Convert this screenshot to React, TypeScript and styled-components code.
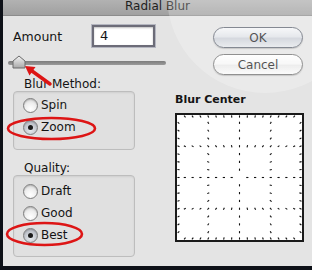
import React from "react";
import styled, { createGlobalStyle } from "styled-components";

const Global = createGlobalStyle`
  html, body { margin: 0; padding: 0; background: #0e1118; }
  body { width: 312px; height: 270px; overflow: hidden; }
  * { box-sizing: border-box; }
`;

const Dialog = styled.div`
  position: relative;
  margin-left: 3px;
  width: 309px;
  height: 266px;
  background: #e4e4e4;
  font-family: "DejaVu Sans", "Liberation Sans", sans-serif;
  font-size: 12px;
  color: #141414;
  overflow: hidden;
  display: flex;
  flex-direction: column;
`;

const Glare = styled.div`
  position: absolute;
  left: 164px;
  top: -103px;
  width: 196px;
  height: 196px;
  border-radius: 50%;
  background: rgba(255, 255, 255, 0.24);
  pointer-events: none;
`;

const TitleBar = styled.div`
  height: 16px;
  flex: none;
  background: linear-gradient(#b2b2b2, #a0a0a0);
  border-bottom: 1px solid #8c8c8c;
  display: flex;
  justify-content: center;
`;

const TitleText = styled.span`
  line-height: 13px;
  font-size: 12px;
  color: #1e1e1e;
`;

const TopRow = styled.div`
  display: flex;
  padding: 9px 9px 0 5px;
`;

const LeftTop = styled.div`
  width: 158px;
  display: flex;
  flex-direction: column;
`;

const AmountRow = styled.div`
  display: flex;
  align-items: center;
  height: 22px;
  padding-left: 5px;
`;

const AmountLabel = styled.span`
  width: 79px;
  font-size: 12.5px;
`;

const NumberBox = styled.div`
  width: 63px;
  height: 22px;
  background: #fff;
  border: 2px solid #6c6c78;
  box-shadow: 0 0 0 1px #b4b6c0, inset 0 1px 2px rgba(0, 0, 0, 0.25);
  padding-left: 6px;
  font-size: 13px;
  line-height: 18px;
`;

const Slider = styled.div`
  position: relative;
  margin-top: 9px;
  height: 14px;
  width: 158px;
`;

const Track = styled.div`
  position: absolute;
  left: 0;
  right: 0;
  top: 5px;
  height: 4px;
  border-radius: 2px;
  background: linear-gradient(#7c7c7c, #9a9a9a);
`;

const Thumb = styled.svg`
  position: absolute;
  left: 4px;
  top: -1px;
`;

const Spacer = styled.div`
  flex: 1;
`;

const Buttons = styled.div`
  width: 90px;
  margin-top: 2px;
  display: flex;
  flex-direction: column;
  gap: 6px;
`;

const PillButton = styled.div<{ $default?: boolean }>`
  height: 21px;
  border-radius: 11px;
  border: 1px solid ${(p) => (p.$default ? "#5e6470" : "#6e6e6e")};
  background: ${(p) =>
    p.$default
      ? "linear-gradient(#f4f5f7 0%, #dfe2e7 45%, #c9cdd5 55%, #e3e6ea 100%)"
      : "linear-gradient(#ffffff 0%, #f6f6f6 45%, #e8e8e8 55%, #fafafa 100%)"};
  box-shadow: 0 1px 1px rgba(0, 0, 0, 0.2);
  display: flex;
  align-items: center;
  justify-content: center;
  font-size: 12px;
  color: #1a1a1a;
`;

const BottomRow = styled.div`
  display: flex;
  padding-left: 10px;
`;

const LeftCol = styled.div`
  width: 122px;
  display: flex;
  flex-direction: column;
`;

const SectionLabel = styled.div<{ $gap: number }>`
  margin-top: ${(p) => p.$gap}px;
  padding-left: 11px;
  line-height: 14px;
  height: 14px;
`;

const GroupBox = styled.div<{ $h: number; $pad: number }>`
  height: ${(p) => p.$h}px;
  padding-top: ${(p) => p.$pad}px;
  padding-left: 9px;
  border: 1px solid #bdbdbd;
  border-radius: 4px;
  background: #e0e0e0;
  box-shadow: inset 0 1px 2px rgba(0, 0, 0, 0.08);
  display: flex;
  flex-direction: column;
`;

const RadioRow = styled.div`
  height: 22px;
  display: flex;
  align-items: center;
  gap: 3px;
`;

const RadioCircle = styled.div<{ $on?: boolean }>`
  width: 15px;
  height: 15px;
  border-radius: 50%;
  border: 1px solid #7e7e7e;
  background: ${(p) =>
    p.$on
      ? "radial-gradient(circle at 50% 70%, #e8ecf0 0%, #b8bcc4 70%, #9ea2aa 100%)"
      : "radial-gradient(circle at 50% 75%, #ffffff 0%, #eeeeee 50%, #c8c8c8 100%)"};
  box-shadow: inset 0 1px 1px rgba(0, 0, 0, 0.15);
  display: flex;
  align-items: center;
  justify-content: center;
  &::after {
    content: "";
    width: 5px;
    height: 5px;
    border-radius: 50%;
    background: #1a1a1a;
    display: ${(p) => (p.$on ? "block" : "none")};
  }
`;

const RightCol = styled.div`
  margin-left: 40px;
  display: flex;
  flex-direction: column;
`;

const BoldLabel = styled.div`
  margin-top: 18px;
  line-height: 14px;
  height: 14px;
  font-size: 11px;
  font-weight: bold;
`;

const CenterBox = styled.div`
  margin-top: 6px;
  width: 129px;
  height: 129px;
  border: 2px solid #1a1a1a;
  background: #fff;
`;

const Annotations = styled.svg`
  position: absolute;
  left: 0;
  top: 0;
  pointer-events: none;
`;

function Radio({ label, on }: { label: string; on?: boolean }) {
  return (
    <RadioRow>
      <RadioCircle $on={on} />
      <span>{label}</span>
    </RadioRow>
  );
}

function CenterGrid() {
  const size = 125;
  const u = size / 16;
  const c = size / 2;
  const pts: [number, number][] = [];
  for (let i = 1; i < 16; i++) {
    for (const L of [4, 8, 12]) {
      pts.push([L * u, i * u]);
      if (i !== 4 && i !== 8 && i !== 12) pts.push([i * u, L * u]);
    }
    pts.push([i * u, 1.5], [i * u, size - 1.5], [1.5, i * u], [size - 1.5, i * u]);
  }
  return (
    <svg width={size} height={size} viewBox={`0 0 ${size} ${size}`}>
      {pts.map(([x, y], k) => {
        const dx = x - c;
        const dy = y - c;
        const d = Math.hypot(dx, dy) || 1;
        const ux = (dx / d) * 1.1;
        const uy = (dy / d) * 1.1;
        return (
          <line
            key={k}
            x1={x - ux}
            y1={y - uy}
            x2={x + ux}
            y2={y + uy}
            stroke="#111"
            strokeWidth={1.1}
          />
        );
      })}
    </svg>
  );
}

export default function App() {
  return (
    <>
      <Global />
      <Dialog>
        <Glare />
        <TitleBar>
          <TitleText>Radial Blur</TitleText>
        </TitleBar>
        <TopRow>
          <LeftTop>
            <AmountRow>
              <AmountLabel>Amount</AmountLabel>
              <NumberBox>4</NumberBox>
            </AmountRow>
            <Slider>
              <Track />
              <Thumb width="14" height="14" viewBox="0 0 14 14">
                <defs>
                  <linearGradient id="tg" x1="0" y1="0" x2="0" y2="1">
                    <stop offset="0" stopColor="#f4f4f4" />
                    <stop offset="1" stopColor="#a8a8a8" />
                  </linearGradient>
                </defs>
                <path
                  d="M7 1 L13 6 L13 13 L1 13 L1 6 Z"
                  fill="url(#tg)"
                  stroke="#6a6a6a"
                  strokeWidth="1"
                  strokeLinejoin="round"
                />
              </Thumb>
            </Slider>
          </LeftTop>
          <Spacer />
          <Buttons>
            <PillButton $default>OK</PillButton>
            <PillButton>Cancel</PillButton>
          </Buttons>
        </TopRow>
        <BottomRow>
          <LeftCol>
            <SectionLabel $gap={2}>Blur Method:</SectionLabel>
            <GroupBox $h={59} $pad={2}>
              <Radio label="Spin" />
              <Radio label="Zoom" on />
            </GroupBox>
            <SectionLabel $gap={11}>Quality:</SectionLabel>
            <GroupBox $h={82} $pad={4}>
              <Radio label="Draft" />
              <Radio label="Good" />
              <Radio label="Best" on />
            </GroupBox>
          </LeftCol>
          <RightCol>
            <BoldLabel>Blur Center</BoldLabel>
            <CenterBox>
              <CenterGrid />
            </CenterBox>
          </RightCol>
        </BottomRow>
        <Annotations width="309" height="266" viewBox="0 0 309 266">
          <ellipse cx="48.5" cy="128.5" rx="43.5" ry="10.5" fill="none" stroke="#dd1515" strokeWidth="2.6" />
          <ellipse cx="41.5" cy="234" rx="37.5" ry="11" fill="none" stroke="#dd1515" strokeWidth="2.6" />
          <line x1="47" y1="84" x2="29" y2="71" stroke="#dd1515" strokeWidth="3.5" strokeLinecap="round" />
          <polygon points="22,66 32.5,67 26.5,75.5" fill="#dd1515" />
        </Annotations>
      </Dialog>
    </>
  );
}
